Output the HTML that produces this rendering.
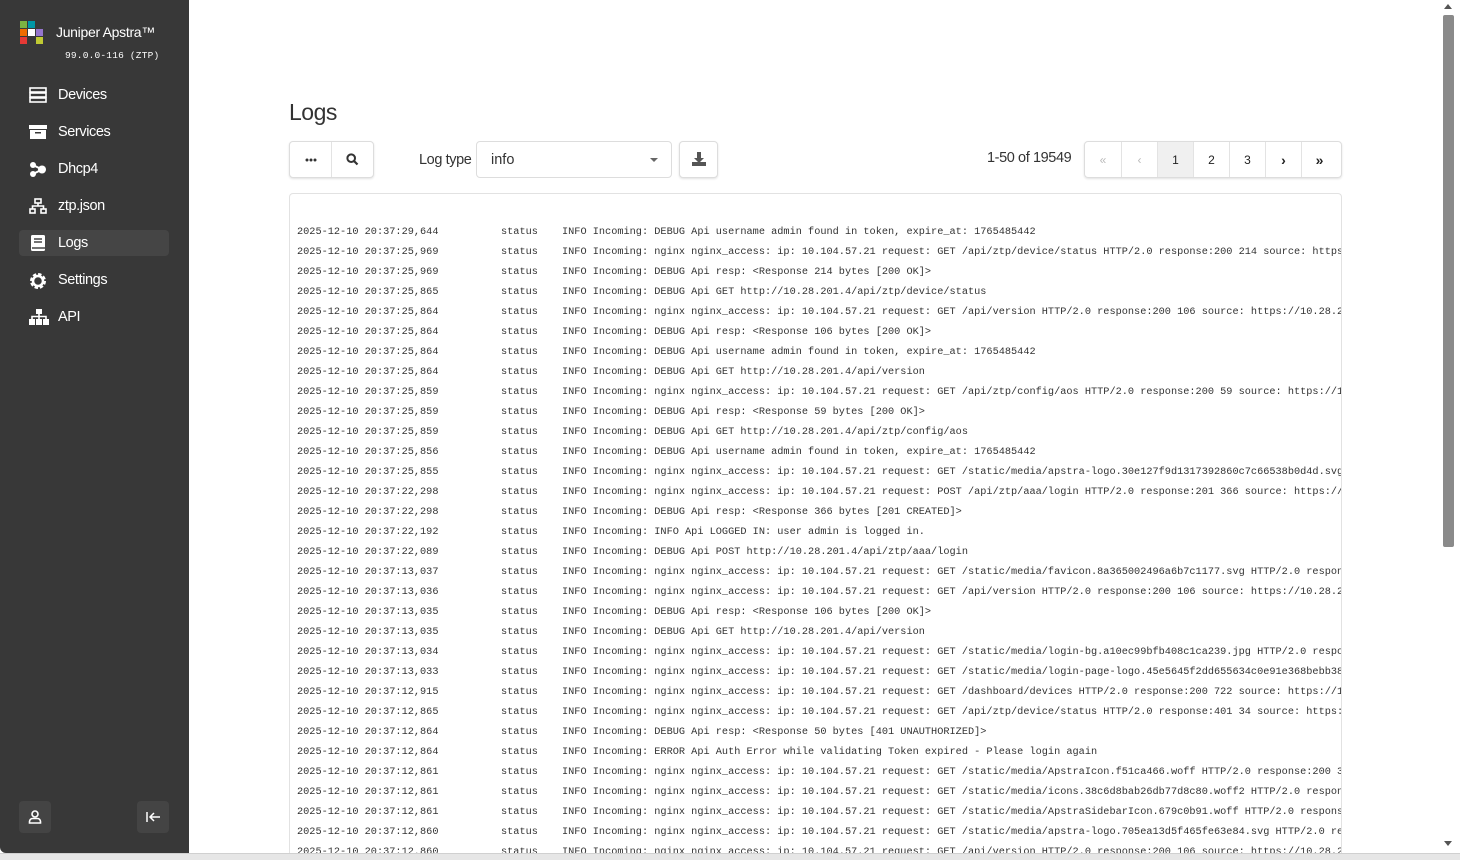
<!DOCTYPE html>
<html><head><meta charset="utf-8"><style>
*{box-sizing:border-box;margin:0;padding:0}
html,body{width:1460px;height:860px;overflow:hidden}
body{background:#fff;font-family:"Liberation Sans",sans-serif;position:relative;color:#333}
.sb{position:absolute;left:0;top:0;width:189px;height:853px;background:#383838;border-bottom-left-radius:6px}
.logo{position:absolute;left:20px;top:21px}
.logo i{position:absolute;width:7px;height:7px}
.brand{position:absolute;left:56px;top:24px;color:#fff;font-size:14px;letter-spacing:-0.3px}
.ver{position:absolute;left:65px;top:50px;color:#fff;font-family:"Liberation Mono",monospace;font-size:9.5px;letter-spacing:0.2px}
.nav{position:absolute;left:19px;width:150px;height:26px;color:#fff;font-size:14.5px;letter-spacing:-0.4px;line-height:26px;padding-left:39px;border-radius:4px}
.nav.act{background:#454545}
.nav svg{position:absolute;left:10px;top:5px}
.bb{position:absolute;top:801px;width:32px;height:32px;background:#444;border-radius:4px}
.ttl{position:absolute;left:289px;top:99px;font-size:23px;color:#333;letter-spacing:-0.5px}
.btn{position:absolute;border:1px solid #ddd;border-radius:4px;box-shadow:0 1px 2px rgba(0,0,0,.12);background:#fff}
.pg{position:absolute;left:1084px;top:141px;height:37px;width:258px;display:flex;border:1px solid #ddd;border-radius:4px;box-shadow:0 1px 2px rgba(0,0,0,.12);overflow:hidden}
.pg div{width:36px;border-left:1px solid #e3e3e3;text-align:center;line-height:36px;font-size:12px;color:#222}
.pg div:first-child{border-left:none}
.log{position:absolute;left:289px;top:193px;width:1053px;height:660px;border:1px solid #e2e2e2;border-bottom:none;border-radius:4px 4px 0 0;overflow:hidden}
.ln{position:absolute;left:7px;height:20px;white-space:pre;font-family:"Liberation Mono",monospace;font-size:10.25px;color:#333;line-height:20px}
.ln span{position:absolute;top:0}
</style></head><body>
<div class="sb">
 <div class="logo">
  <i style="left:0;top:0;background:#7cb342"></i><i style="left:8px;top:0;background:#0097a7"></i>
  <i style="left:0;top:8px;background:#ef6c00"></i><i style="left:8px;top:8px;background:#fff"></i><i style="left:16px;top:8px;background:#9575cd"></i>
  <i style="left:0;top:16px;background:#e53935"></i><i style="left:16px;top:16px;background:#c0ca33"></i>
 </div>
 <div class="brand">Juniper Apstra™</div>
 <div class="ver">99.0.0-116 (ZTP)</div>
 <div class="nav" style="top:82px"><svg width="18" height="16" viewBox="0 0 18 16"><g fill="none" stroke="#fff" stroke-width="1.6"><rect x="1" y="1" width="16" height="4"/><rect x="1" y="6" width="16" height="4"/><rect x="1" y="11" width="16" height="4"/></g></svg>Devices</div>
 <div class="nav" style="top:119px"><svg width="18" height="16" viewBox="0 0 18 16"><rect x="0" y="1" width="18" height="4" fill="#fff"/><rect x="1" y="6" width="16" height="9" fill="#fff"/><rect x="6" y="8" width="6" height="1.5" fill="#383838"/></svg>Services</div>
 <div class="nav" style="top:156px"><svg width="18" height="16" viewBox="0 0 18 16"><circle cx="4" cy="4" r="3" fill="#fff"/><circle cx="4" cy="13" r="3" fill="#fff"/><circle cx="13" cy="8.5" r="4" fill="#fff"/><path d="M4 4L13 8.5L4 13" stroke="#fff" stroke-width="2" fill="none"/></svg>Dhcp4</div>
 <div class="nav" style="top:193px"><svg width="18" height="16" viewBox="0 0 18 16"><g fill="none" stroke="#fff" stroke-width="1.6"><rect x="6" y="1" width="6" height="4"/><rect x="1" y="11" width="5" height="4"/><rect x="12" y="11" width="5" height="4"/><path d="M9 5v3M3.5 11V8h11v3"/></g></svg>ztp.json</div>
 <div class="nav act" style="top:230px"><svg width="18" height="16" viewBox="0 0 18 16"><rect x="2" y="0" width="14" height="16" rx="1.5" fill="#fff"/><path d="M5 4h8M5 7h8M3 13h13" stroke="#454545" stroke-width="1.4"/></svg>Logs</div>
 <div class="nav" style="top:267px"><svg width="18" height="18" viewBox="0 0 18 18"><circle cx="9" cy="9" r="6" fill="none" stroke="#fff" stroke-width="4" stroke-dasharray="3 1.7"/><circle cx="9" cy="9" r="5" fill="none" stroke="#fff" stroke-width="2.5"/></svg>Settings</div>
 <div class="nav" style="top:304px"><svg width="20" height="16" viewBox="0 0 20 16"><rect x="7" y="0" width="6" height="5" fill="#fff"/><rect x="0" y="10" width="6" height="6" fill="#fff"/><rect x="7" y="10" width="6" height="6" fill="#fff"/><rect x="14" y="10" width="6" height="6" fill="#fff"/><path d="M10 5v5M3 10V7.5h14V10" stroke="#fff" stroke-width="1.6" fill="none"/></svg>API</div>
 <div class="bb" style="left:19px"><svg width="32" height="32" viewBox="0 0 32 32"><circle cx="16" cy="13" r="3" fill="none" stroke="#fff" stroke-width="1.6"/><path d="M10.5 22v-1.5a3 3 0 0 1 3-3h5a3 3 0 0 1 3 3V22z" fill="none" stroke="#fff" stroke-width="1.6"/></svg></div>
 <div class="bb" style="left:137px"><svg width="32" height="32" viewBox="0 0 32 32"><path d="M10 11v10M23 16H13M17 12l-4 4 4 4" fill="none" stroke="#fff" stroke-width="1.5"/></svg></div>
</div>
<div class="ttl">Logs</div>
<div class="btn" style="left:289px;top:141px;width:85px;height:37px">
 <div style="position:absolute;left:41px;top:0;width:1px;height:35px;background:#e3e3e3"></div>
 <svg style="position:absolute;left:15px;top:16px" width="12" height="4" viewBox="0 0 12 4"><circle cx="2" cy="2" r="1.5" fill="#333"/><circle cx="6" cy="2" r="1.5" fill="#333"/><circle cx="10" cy="2" r="1.5" fill="#333"/></svg>
 <svg style="position:absolute;left:56px;top:11px" width="13" height="13" viewBox="0 0 13 13"><circle cx="5.2" cy="5.2" r="3.8" fill="none" stroke="#333" stroke-width="2"/><path d="M8 8l3.5 3.5" stroke="#333" stroke-width="2.2"/></svg>
</div>
<div style="position:absolute;left:419px;top:152px;font-size:14.5px;letter-spacing:-0.4px">Log type</div>
<div class="btn" style="left:476px;top:141px;width:196px;height:37px;box-shadow:none">
 <div style="position:absolute;left:14px;top:10px;font-size:14.5px">info</div>
 <div style="position:absolute;left:173px;top:16px;border:4px solid transparent;border-top:4px solid #666;border-bottom:0"></div>
</div>
<div class="btn" style="left:679px;top:141px;width:39px;height:37px"><svg style="position:absolute;left:12px;top:10px" width="14" height="14" viewBox="0 0 14 14"><path d="M5 0h4v6h3l-5 5-5-5h3z" fill="#555"/><rect x="0" y="10" width="14" height="4" fill="#555"/></svg></div>
<div style="position:absolute;left:987px;top:150px;font-size:14.5px;letter-spacing:-0.4px">1-50 of 19549</div>
<div class="pg"><div style="color:#bbb">«</div><div style="color:#bbb">‹</div><div style="background:#f0f0f0">1</div><div>2</div><div>3</div><div style="font-weight:bold;font-size:14px">›</div><div style="font-weight:bold;font-size:14px">»</div></div>
<div class="log">
<div id="L"></div>
</div>
<div style="position:absolute;left:1443px;top:15px;width:11px;height:532px;background:#8a8a8a;border-radius:2px"></div>
<div style="position:absolute;left:1444px;top:4px;border:4px solid transparent;border-bottom:5px solid #555;border-top:0"></div>
<div style="position:absolute;left:1444px;top:841px;border:4px solid transparent;border-top:5px solid #555;border-bottom:0"></div>
<div style="position:absolute;left:0;top:853px;width:1460px;height:7px;background:#e6e6e6;border-top:1px solid #d0d0d0"></div>
<script>
var d=[["29,644","DEBUG Api username admin found in token, expire_at: 1765485442"],
["25,969","nginx nginx_access: ip: 10.104.57.21 request: GET /api/ztp/device/status HTTP/2.0 response:200 214 source: https://10.28.201.4/"],
["25,969","DEBUG Api resp: <Response 214 bytes [200 OK]>"],
["25,865","DEBUG Api GET http://10.28.201.4/api/ztp/device/status"],
["25,864","nginx nginx_access: ip: 10.104.57.21 request: GET /api/version HTTP/2.0 response:200 106 source: https://10.28.201.4/"],
["25,864","DEBUG Api resp: <Response 106 bytes [200 OK]>"],
["25,864","DEBUG Api username admin found in token, expire_at: 1765485442"],
["25,864","DEBUG Api GET http://10.28.201.4/api/version"],
["25,859","nginx nginx_access: ip: 10.104.57.21 request: GET /api/ztp/config/aos HTTP/2.0 response:200 59 source: https://10.28.201.4/"],
["25,859","DEBUG Api resp: <Response 59 bytes [200 OK]>"],
["25,859","DEBUG Api GET http://10.28.201.4/api/ztp/config/aos"],
["25,856","DEBUG Api username admin found in token, expire_at: 1765485442"],
["25,855","nginx nginx_access: ip: 10.104.57.21 request: GET /static/media/apstra-logo.30e127f9d1317392860c7c66538b0d4d.svg HTTP/2.0"],
["22,298","nginx nginx_access: ip: 10.104.57.21 request: POST /api/ztp/aaa/login HTTP/2.0 response:201 366 source: https://10.28.201.4/"],
["22,298","DEBUG Api resp: <Response 366 bytes [201 CREATED]>"],
["22,192","INFO Api LOGGED IN: user admin is logged in."],
["22,089","DEBUG Api POST http://10.28.201.4/api/ztp/aaa/login"],
["13,037","nginx nginx_access: ip: 10.104.57.21 request: GET /static/media/favicon.8a365002496a6b7c1177.svg HTTP/2.0 response:200"],
["13,036","nginx nginx_access: ip: 10.104.57.21 request: GET /api/version HTTP/2.0 response:200 106 source: https://10.28.201.4/"],
["13,035","DEBUG Api resp: <Response 106 bytes [200 OK]>"],
["13,035","DEBUG Api GET http://10.28.201.4/api/version"],
["13,034","nginx nginx_access: ip: 10.104.57.21 request: GET /static/media/login-bg.a10ec99bfb408c1ca239.jpg HTTP/2.0 response:200"],
["13,033","nginx nginx_access: ip: 10.104.57.21 request: GET /static/media/login-page-logo.45e5645f2dd655634c0e91e368bebb38.svg"],
["12,915","nginx nginx_access: ip: 10.104.57.21 request: GET /dashboard/devices HTTP/2.0 response:200 722 source: https://10.28.201.4/"],
["12,865","nginx nginx_access: ip: 10.104.57.21 request: GET /api/ztp/device/status HTTP/2.0 response:401 34 source: https://10.28.201.4/"],
["12,864","DEBUG Api resp: <Response 50 bytes [401 UNAUTHORIZED]>"],
["12,864","ERROR Api Auth Error while validating Token expired - Please login again"],
["12,861","nginx nginx_access: ip: 10.104.57.21 request: GET /static/media/ApstraIcon.f51ca466.woff HTTP/2.0 response:200 3"],
["12,861","nginx nginx_access: ip: 10.104.57.21 request: GET /static/media/icons.38c6d8bab26db77d8c80.woff2 HTTP/2.0 response:200"],
["12,861","nginx nginx_access: ip: 10.104.57.21 request: GET /static/media/ApstraSidebarIcon.679c0b91.woff HTTP/2.0 response:200"],
["12,860","nginx nginx_access: ip: 10.104.57.21 request: GET /static/media/apstra-logo.705ea13d5f465fe63e84.svg HTTP/2.0 response"],
["12,860","nginx nginx_access: ip: 10.104.57.21 request: GET /api/version HTTP/2.0 response:200 106 source: https://10.28.201.4/"]];
var h="";d.forEach(function(r,i){h+='<div class="ln" style="top:'+(28+i*20)+'px"><span style="left:0">2025-12-10 20:37:'+r[0]+'</span><span style="left:204px">status</span><span style="left:265px">INFO Incoming: '+r[1].replace(/</g,"&lt;")+'</span></div>';});
document.getElementById("L").innerHTML=h;
</script>
</body></html>
